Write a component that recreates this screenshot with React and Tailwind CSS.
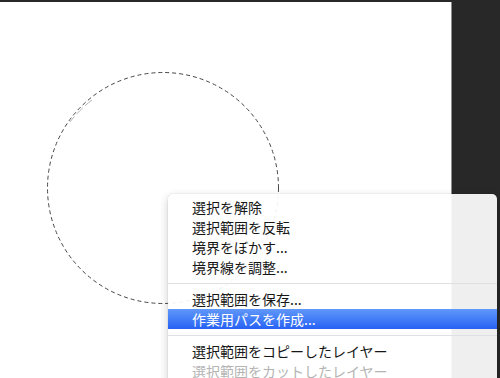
import React from "react";

const items = [
    { label: "選択を解除" },
    { label: "選択範囲を反転" },
    { label: "境界をぼかす..." },
    { label: "境界線を調整..." },
    { sep: true },
    { label: "選択範囲を保存..." },
    { label: "作業用パスを作成...", active: true },
    { sep: true },
    { label: "選択範囲をコピーしたレイヤー" },
    { label: "選択範囲をカットしたレイヤー", disabled: true },
];

function ContextMenu() {
    return (
        <div className="absolute left-[168px] top-[194px] w-[329px] h-[200px] rounded-[5px] bg-[rgba(255,255,255,0.93)] pt-[3px] shadow-[0_0_1px_rgba(0,0,0,0.3),0_3px_10px_rgba(0,0,0,0.2)]">
            {items.map((item, i) => {
                if (item.sep) {
                    return (
                        <div key={i} className="h-[12px] flex items-center">
                            <div className="w-full h-px bg-[#e0e0e0]" />
                        </div>
                    );
                }
                let cls = "text-[#161616]";
                if (item.active) cls = "text-white bg-gradient-to-b from-[#6097fa] to-[#2761f4]";
                if (item.disabled) cls = "text-[#b4b4b4]";
                return (
                    <div key={i} className={`h-[20px] pl-[24px] flex items-center text-[14px] leading-none ${cls}`}>
                        {item.label}
                    </div>
                );
            })}
        </div>
    );
}

export default function App() {
    return (
        <div
            className="relative w-[500px] h-[378px] overflow-hidden bg-[#282828] pt-[2px]"
            style={{ fontFamily: '"Noto Sans CJK JP", "Noto Sans", sans-serif' }}
        >
            <div className="relative w-[452px] h-full bg-white border-r border-[#8c8c8c]">
                {/* marching ants selection */}
                <svg className="absolute left-0 top-0" width="452" height="376" viewBox="0 0 452 376">
                    <circle cx="163" cy="186" r="115.5" fill="none" stroke="#444" strokeWidth="1" strokeDasharray="4 3" />
                    <path d="M 92 98 A 115.5 115.5 0 0 0 70 120" fill="none" stroke="#fff" strokeWidth="2" />
                    <path d="M 92 98 A 115.5 115.5 0 0 0 70 120" fill="none" stroke="#b5b5b5" strokeWidth="1" strokeDasharray="9 3" />
                </svg>
            </div>
            <ContextMenu />
        </div>
    );
}
